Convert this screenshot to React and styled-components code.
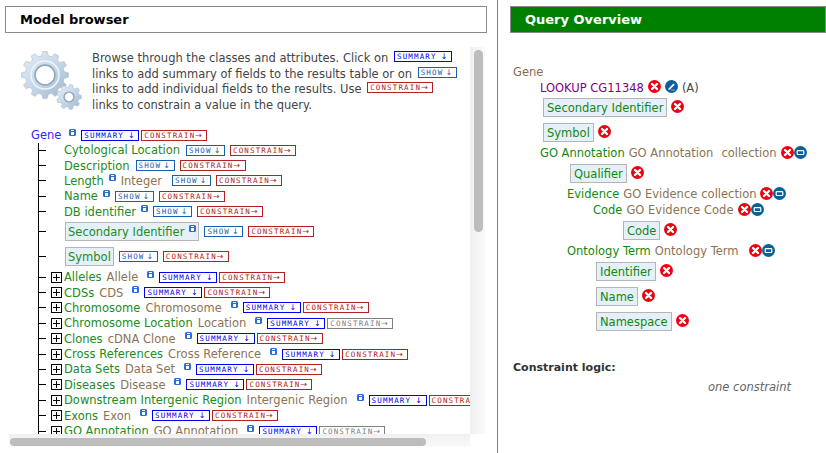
import React from "react";
import styled, { createGlobalStyle } from "styled-components";

const GlobalStyle = createGlobalStyle`
  html, body {
    margin: 0;
    padding: 0;
    background: #fff;
    overflow: hidden;
  }
  body {
    font-family: "DejaVu Sans", "Liberation Sans", sans-serif;
    font-size: 11.5px;
  }
`;

const Page = styled.div`
  display: grid;
  grid-template-columns: 497px 1px 328px;
  width: 826px;
  height: 453px;
  overflow: hidden;
`;

const LeftColumn = styled.div`
  padding: 6px 10px 0 5px;
  min-width: 0;
`;

const Divider = styled.div`
  background: #808080;
`;

const RightColumn = styled.div`
  padding: 6px 0 0 12px;
`;

const Header = styled.h2`
  margin: 0;
  height: 27px;
  box-sizing: border-box;
  border: 1px solid #8a8a8a;
  padding-left: ${p => p.$pad}px;
  font-size: 13px;
  line-height: 26px;
  font-weight: bold;
  color: ${p => (p.$green ? "#fff" : "#000")};
  background: ${p => (p.$green ? "#008000" : "#fff")};
`;

/* model browser */
const Browser = styled.div`
  display: grid;
  grid-template-columns: 465px 15px;
  grid-template-rows: 387px 13px;
  margin-top: 14px;
`;

const Scroller = styled.div`
  overflow: hidden;
  white-space: nowrap;
`;

const VerticalTrack = styled.div`
  background: linear-gradient(to right, #f0f0f0, #fafafa);
  padding: 3px 2px 0 4px;
`;

const VerticalThumb = styled.div`
  height: 182px;
  border-radius: 5px;
  background: #bdbdbd;
`;

const HorizontalTrack = styled.div`
  margin-left: 4px;
  background: linear-gradient(to bottom, #f0f0f0, #fafafa);
  padding: 4px 0 1px 1px;
  box-sizing: border-box;
`;

const HorizontalThumb = styled.div`
  width: 416px;
  height: 8px;
  border-radius: 4px;
  background: #bdbdbd;
`;

const Intro = styled.div`
  display: flex;
  padding: 4px 0 0 16px;
  height: 77px;
  color: #444;
`;

const GearBox = styled.div`
  width: 71px;
  margin-top: -1px;
  flex: none;
`;

const IntroText = styled.p`
  margin: 0;
  line-height: 15.5px;
`;

const Pill = styled.span`
  display: inline-block;
  box-sizing: border-box;
  height: 11px;
  width: ${p => p.$w}px;
  margin-top: -2px;
  margin-bottom: -2px;
  margin-left: ${p => p.$ml ?? 0}px;
  padding-left: 2px;
  flex: none;
  border: 1px solid ${p => p.$color};
  color: ${p => p.$color};
  font-family: "DejaVu Sans Mono", monospace;
  font-size: 7.5px;
  line-height: 9px;
  letter-spacing: 1.15px;
  text-align: left;
  white-space: nowrap;
  overflow: hidden;
  vertical-align: 2px;
`;

const Arrow = styled.span`
  font-family: "DejaVu Sans", sans-serif;
  font-size: 8px;
  letter-spacing: 0;
  margin-left: ${p => p.$ml}px;
`;

const Summary = p => (
  <Pill $w={58} $color="#0000ee" {...p}>
    SUMMARY<Arrow $ml={4}>↓</Arrow>
  </Pill>
);
const Show = p => (
  <Pill $w={39} $color="#1560b5" {...p}>
    SHOW<Arrow $ml={2}>↓</Arrow>
  </Pill>
);
const Constrain = ({ off, ...p }) => (
  <Pill $w={66} $color={off ? "#808080" : "#b22222"} {...p}>
    CONSTRAIN<Arrow $ml={0}>→</Arrow>
  </Pill>
);

const Tree = styled.div`
  padding-left: 26px;
`;

const RootRow = styled.div`
  display: flex;
  align-items: center;
  height: 14.5px;
`;

const RootName = styled.span`
  color: #2a2aee;
`;

const Branch = styled.div`
  margin-left: 7px;
  padding-bottom: 20px;
  border-left: 1px solid #000;
`;

const TreeRow = styled.div`
  display: flex;
  align-items: center;
  height: ${p => (p.$boxed ? 25 : 15.4)}px;
`;

const Tick = styled.span`
  width: 7px;
  height: 1px;
  flex: none;
  background: #000;
`;

const Expander = styled.span`
  width: 11px;
  height: 11px;
  flex: none;
  box-sizing: border-box;
  margin: 0 2px 0 5px;
  border: 1px solid #000;
  background:
    linear-gradient(#000, #000) center / 7px 1px no-repeat,
    linear-gradient(#000, #000) center / 1px 7px no-repeat;
`;

const LeafGap = styled.span`
  width: 18px;
  flex: none;
`;

const FieldName = styled.span`
  color: #228b22;
`;

const TypeName = styled.span`
  color: #8b7355;
  margin-left: 5px;
`;

const Selected = styled.span`
  display: inline-flex;
  align-items: center;
  box-sizing: border-box;
  height: 19px;
  margin-left: 1px;
  padding: 0 2px;
  background: #e6f0fa;
  border: 1px solid #b5b5b5;
  color: #228b22;
`;

const Info = styled.svg`
  width: 7px;
  height: 7px;
  flex: none;
  margin: 0 0 6px ${p => p.$ml ?? 5}px;
`;

/* query overview */
const QueryList = styled.div`
  padding: 31px 0 0 3px;
  white-space: nowrap;
`;

const QueryRow = styled.div`
  display: flex;
  align-items: center;
  height: ${p => p.$h}px;
  padding-left: ${p => p.$indent}px;
`;

const RootType = styled.span`
  color: #8b6b4f;
`;

const Lookup = styled.span`
  color: #800080;
`;

const Letter = styled.span`
  color: #444;
  margin-left: 4px;
`;

const QueryField = styled.span`
  color: #118811;
`;

const QueryType = styled.span`
  color: #8b7355;
  margin-left: 4px;
`;

const Collection = styled.span`
  color: #8b7355;
  margin-left: ${p => p.$ml ?? 8}px;
`;

const QueryBox = styled(Selected)`
  margin-left: 0;
  padding: 0 3px;
  color: #118811;
`;

const Disc = styled.svg`
  width: 13px;
  height: 13px;
  flex: none;
  margin-left: ${p => p.$ml ?? 4}px;
  margin-bottom: ${p => p.$up ?? 2}px;
`;

const LogicTitle = styled.div`
  margin: 27px 0 0 3px;
  font-size: 11px;
  font-weight: bold;
  color: #333;
`;

const LogicNote = styled.div`
  margin: 6px 0 0 198px;
  font-style: italic;
  color: #666;
`;

const InfoIcon = ({ ml }) => (
  <Info $ml={ml} viewBox="0 0 7 7">
    <rect width="7" height="7" rx="1.5" fill="#2a6fd6" />
    <rect x="2" y="1" width="3" height="1" fill="#fff" />
    <rect x="2" y="3" width="3" height="3" fill="#fff" />
  </Info>
);

const RemoveIcon = ({ ml, up }) => (
  <Disc $ml={ml} $up={up} viewBox="0 0 13 13">
    <circle cx="6.5" cy="6.5" r="6.5" fill="#ee0011" />
    <path d="M4 4l5 5M9 4l-5 5" stroke="#fff" strokeWidth="2.4" strokeLinecap="round" />
  </Disc>
);

const EditIcon = ({ ml }) => (
  <Disc $ml={ml} viewBox="0 0 13 13">
    <circle cx="6.5" cy="6.5" r="6.5" fill="#0d5f97" />
    <path d="M3.5 8.5L8.5 3.5l1.2 1.2L4.7 9.7H3.5z" fill="#fff" />
    <path d="M6.5 10h3.5" stroke="#fff" strokeWidth="1" strokeDasharray="1 1" />
  </Disc>
);

const CollapseIcon = ({ ml = 0 }) => (
  <Disc $ml={ml} viewBox="0 0 13 13">
    <circle cx="6.5" cy="6.5" r="6.5" fill="#0d5f97" />
    <rect x="3.2" y="4.7" width="6.6" height="3.8" rx="0.8" fill="none" stroke="#fff" strokeWidth="1.2" />
  </Disc>
);

const gearPath = (cx, cy, outer, root, hole, teeth) => {
  let d = "";
  const step = (Math.PI * 2) / teeth;
  for (let i = 0; i < teeth; i++) {
    const a = i * step;
    [
      [root, a - step * 0.32],
      [outer, a - step * 0.18],
      [outer, a + step * 0.18],
      [root, a + step * 0.32],
    ].forEach(([r, t]) => {
      const x = (cx + r * Math.cos(t)).toFixed(2);
      const y = (cy + r * Math.sin(t)).toFixed(2);
      d += `${d ? "L" : "M"}${x} ${y}`;
    });
  }
  d += `Z M${cx + hole} ${cy}A${hole} ${hole} 0 1 0 ${cx - hole} ${cy}A${hole} ${hole} 0 1 0 ${cx + hole} ${cy}Z`;
  return d;
};

const Gears = () => (
  <svg width="66" height="62" viewBox="0 0 66 62">
    <defs>
      <linearGradient id="steel" x1="0" y1="0" x2="1" y2="1">
        <stop offset="0" stopColor="#e6eef6" />
        <stop offset="0.55" stopColor="#c3d5e6" />
        <stop offset="1" stopColor="#9bb3ca" />
      </linearGradient>
    </defs>
    <path d={gearPath(24, 25, 23.5, 19.5, 9.5, 12)} fill="url(#steel)" fillRule="evenodd" stroke="#a9bccd" strokeWidth="0.6" />
    <circle cx="24" cy="25" r="10" fill="none" stroke="#8ea5bb" strokeWidth="1.4" />
    <circle cx="24" cy="25" r="14" fill="none" stroke="#eef4fa" strokeWidth="1.5" />
    <path d={gearPath(48, 47, 12.5, 10, 4.5, 9)} fill="url(#steel)" fillRule="evenodd" stroke="#a9bccd" strokeWidth="0.6" />
    <circle cx="48" cy="47" r="5" fill="none" stroke="#8ea5bb" strokeWidth="1.2" />
  </svg>
);

const leaves = [
  { name: "Cytological Location", gap: 6 },
  { name: "Description", gap: 6 },
  { name: "Length", info: true, type: "Integer", gap: 10 },
  { name: "Name", info: true, gap: 5 },
  { name: "DB identifier", info: true, gap: 5 },
  { name: "Secondary Identifier", info: true, boxed: true, gap: 5 },
  { name: "Symbol", boxed: true, gap: 5 },
];

const collections = [
  ["Alleles", "Allele"],
  ["CDSs", "CDS"],
  ["Chromosome", "Chromosome"],
  ["Chromosome Location", "Location"],
  ["Clones", "cDNA Clone"],
  ["Cross References", "Cross Reference"],
  ["Data Sets", "Data Set"],
  ["Diseases", "Disease"],
  ["Downstream Intergenic Region", "Intergenic Region"],
  ["Exons", "Exon"],
  ["GO Annotation", "GO Annotation"],
];

const noConstrain = ["Chromosome Location", "GO Annotation"];

const LeafRow = ({ name, info, type, boxed, gap }) => (
  <TreeRow $boxed={boxed}>
    <Tick />
    <LeafGap />
    {boxed ? (
      <Selected>
        {name}
        {info && <InfoIcon />}
      </Selected>
    ) : (
      <FieldName>{name}</FieldName>
    )}
    {!boxed && info && <InfoIcon />}
    {type && <TypeName>{type}</TypeName>}
    <Show $ml={gap} />
    <Constrain $ml={5} />
  </TreeRow>
);

const ModelBrowser = () => (
  <Browser>
    <Scroller>
      <Intro>
        <GearBox>
          <Gears />
        </GearBox>
        <IntroText>
          Browse through the classes and attributes. Click on <Summary $ml={2} />
          <br />
          links to add summary of fields to the results table or on <Show $ml={2} />
          <br />
          links to add individual fields to the results. Use <Constrain $ml={2} />
          <br />
          links to constrain a value in the query.
        </IntroText>
      </Intro>
      <Tree>
        <RootRow>
          <RootName>Gene</RootName>
          <InfoIcon ml={8} />
          <Summary $ml={5} />
          <Constrain $ml={2} />
        </RootRow>
        <Branch>
          {leaves.map(leaf => (
            <LeafRow key={leaf.name} {...leaf} />
          ))}
          {collections.map(([name, type]) => (
            <TreeRow key={name}>
              <Tick />
              <Expander />
              <FieldName>{name}</FieldName>
              <TypeName>{type}</TypeName>
              <InfoIcon ml={9} />
              <Summary $ml={5} />
              <Constrain $ml={2} off={noConstrain.includes(name)} />
            </TreeRow>
          ))}
        </Branch>
      </Tree>
    </Scroller>
    <VerticalTrack>
      <VerticalThumb />
    </VerticalTrack>
    <HorizontalTrack>
      <HorizontalThumb />
    </HorizontalTrack>
  </Browser>
);

const QueryOverview = () => (
  <QueryList>
    <QueryRow $h={16} $indent={0}>
      <RootType>Gene</RootType>
    </QueryRow>
    <QueryRow $h={15} $indent={27}>
      <Lookup>LOOKUP CG11348</Lookup>
      <RemoveIcon />
      <EditIcon />
      <Letter>(A)</Letter>
    </QueryRow>
    <QueryRow $h={25} $indent={30}>
      <QueryBox>Secondary Identifier</QueryBox>
      <RemoveIcon up={3} />
    </QueryRow>
    <QueryRow $h={25} $indent={30}>
      <QueryBox>Symbol</QueryBox>
      <RemoveIcon up={3} />
    </QueryRow>
    <QueryRow $h={16} $indent={27}>
      <QueryField>GO Annotation</QueryField>
      <QueryType>GO Annotation</QueryType>
      <Collection>collection</Collection>
      <RemoveIcon />
      <CollapseIcon />
    </QueryRow>
    <QueryRow $h={25} $indent={57}>
      <QueryBox>Qualifier</QueryBox>
      <RemoveIcon up={3} />
    </QueryRow>
    <QueryRow $h={16} $indent={54}>
      <QueryField>Evidence</QueryField>
      <QueryType>GO Evidence</QueryType>
      <Collection $ml={4}>collection</Collection>
      <RemoveIcon />
      <CollapseIcon />
    </QueryRow>
    <QueryRow $h={16} $indent={80}>
      <QueryField>Code</QueryField>
      <QueryType>GO Evidence Code</QueryType>
      <RemoveIcon />
      <CollapseIcon />
    </QueryRow>
    <QueryRow $h={25} $indent={110}>
      <QueryBox>Code</QueryBox>
      <RemoveIcon up={3} />
    </QueryRow>
    <QueryRow $h={16} $indent={54}>
      <QueryField>Ontology Term</QueryField>
      <QueryType>Ontology Term</QueryType>
      <RemoveIcon ml={10} />
      <CollapseIcon />
    </QueryRow>
    <QueryRow $h={25} $indent={83}>
      <QueryBox>Identifier</QueryBox>
      <RemoveIcon up={3} />
    </QueryRow>
    <QueryRow $h={25} $indent={83}>
      <QueryBox>Name</QueryBox>
      <RemoveIcon up={3} />
    </QueryRow>
    <QueryRow $h={25} $indent={83}>
      <QueryBox>Namespace</QueryBox>
      <RemoveIcon up={3} />
    </QueryRow>
  </QueryList>
);

export default function App() {
  return (
    <Page>
      <GlobalStyle />
      <LeftColumn>
        <Header $pad={14}>Model browser</Header>
        <ModelBrowser />
      </LeftColumn>
      <Divider />
      <RightColumn>
        <Header $green $pad={14}>Query Overview</Header>
        <QueryOverview />
        <LogicTitle>Constraint logic:</LogicTitle>
        <LogicNote>one constraint</LogicNote>
      </RightColumn>
    </Page>
  );
}
